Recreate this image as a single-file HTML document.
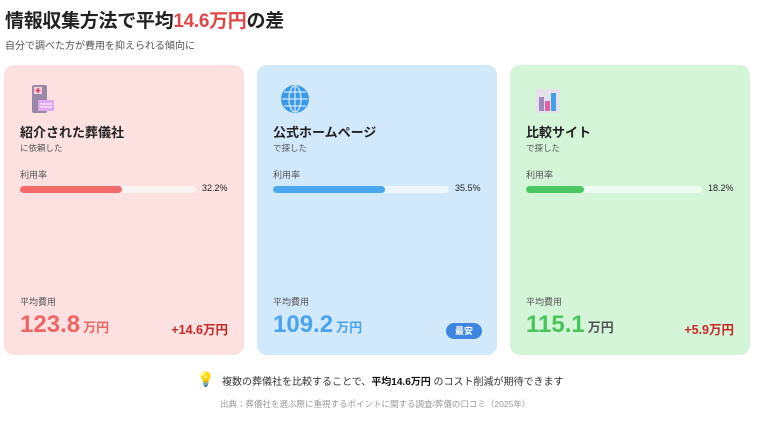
<!DOCTYPE html>
<html><head><meta charset="utf-8"><style>
*{margin:0;padding:0;box-sizing:border-box}
body{width:763px;height:421px;background:#fff;font-family:"Liberation Sans","Noto Sans CJK JP",sans-serif;position:relative;overflow:hidden;color:#222}
.abs{position:absolute;white-space:nowrap}
h1{position:absolute;left:5px;top:6px;font-size:19px;font-weight:bold;color:#222;letter-spacing:-0.3px}
h1 span{color:#e04848}
.sub{left:5px;top:37px;font-size:10px;color:#555}
.card{position:absolute;top:65px;width:240px;height:290px;border-radius:10px}
.card .t{position:absolute;left:16px;top:57px;font-size:13px;font-weight:bold;color:#222}
.card .s{position:absolute;left:16px;top:77px;font-size:8.5px;color:#555}
.card .r{position:absolute;left:16px;top:103px;font-size:9px;color:#555}
.card .bar{position:absolute;left:16px;top:121px;width:176px;height:7px;border-radius:4px;background:rgba(255,255,255,.6)}
.card .bar i{position:absolute;left:0;top:0;height:7px;border-radius:4px}
.card .p{position:absolute;left:198px;top:118px;font-size:9px;color:#222}
.card .a{position:absolute;left:16px;top:230px;font-size:9px;color:#555}
.card .n{position:absolute;left:16px;top:246px;font-size:24px;font-weight:bold}
.card .n small{font-size:13px;margin-left:3px}
.card .d{position:absolute;right:16px;top:254px;font-size:12.5px;font-weight:bold;color:#c62828}
.icon{position:absolute;left:22px;top:18px;width:32px;height:32px}
</style></head><body>
<h1>情報収集方法で平均<span>14.6万円</span>の差</h1>
<div class="abs sub">自分で調べた方が費用を抑えられる傾向に</div>

<div class="card" style="left:4px;background:#fde1e1">
<svg class="icon" viewBox="0 0 32 32"><rect x="6" y="2" width="15" height="28" rx="2" fill="#9a88a8"/><rect x="8" y="4" width="8" height="7" fill="#f4d0dc"/><path d="M12 5v5M9.5 7.5h5" stroke="#e0405a" stroke-width="1.6"/><rect x="12" y="17" width="16" height="11" rx="1" fill="#e0a8f0"/><path d="M14 21h12M14 24h12" stroke="#fff" stroke-width="1"/></svg>
<div class="t">紹介された葬儀社</div><div class="s">に依頼した</div>
<div class="r">利用率</div><div class="bar"><i style="width:102px;background:#f46a6a"></i></div><div class="p">32.2%</div>
<div class="a">平均費用</div><div class="n" style="color:#ef6565">123.8<small style="color:#ef6565">万円</small></div><div class="d">+14.6万円</div>
</div>

<div class="card" style="left:257px;background:#d2e9fc">
<svg class="icon" viewBox="0 0 32 32"><circle cx="16" cy="16" r="14" fill="#3a9ae8"/><g fill="none" stroke="#cfe8ff" stroke-width="1.3"><ellipse cx="16" cy="16" rx="6" ry="13"/><path d="M16 3v26M3 16h26M5 9h22M5 23h22"/></g></svg>
<div class="t">公式ホームページ</div><div class="s">で探した</div>
<div class="r">利用率</div><div class="bar"><i style="width:112px;background:#4aa8ef"></i></div><div class="p">35.5%</div>
<div class="a">平均費用</div><div class="n" style="color:#4aa3ee">109.2<small style="color:#4aa3ee">万円</small></div>
<div class="abs" style="left:189px;top:258px;width:36px;height:16px;border-radius:8px;background:#3d86e0;color:#fff;font-size:9px;font-weight:bold;text-align:center;line-height:16px">最安</div>
</div>

<div class="card" style="left:510px;background:#d4f5d8">
<svg class="icon" viewBox="0 0 32 32"><rect x="4" y="6" width="24" height="24" rx="2" fill="#e6e0ec"/><rect x="7" y="14" width="5" height="14" fill="#9a88c0"/><rect x="13" y="18" width="5" height="10" fill="#e060a0"/><rect x="19" y="10" width="5" height="18" fill="#40a0e8"/></svg>
<div class="t">比較サイト</div><div class="s">で探した</div>
<div class="r">利用率</div><div class="bar"><i style="width:58px;background:#4cc862"></i></div><div class="p">18.2%</div>
<div class="a">平均費用</div><div class="n" style="color:#4cc45c">115.1<small style="color:#555">万円</small></div><div class="d">+5.9万円</div>
</div>

<div class="abs" style="left:197px;top:371px;font-size:14px">💡</div>
<div class="abs" style="left:222px;top:373px;font-size:10px;color:#333">複数の葬儀社を比較することで、<b style="color:#111">平均14.6万円</b> のコスト削減が期待できます</div>
<div class="abs" style="left:220px;top:398px;font-size:8.5px;color:#999">出典：葬儀社を選ぶ際に重視するポイントに関する調査/葬儀の口コミ（2025年）</div>
</body></html>
